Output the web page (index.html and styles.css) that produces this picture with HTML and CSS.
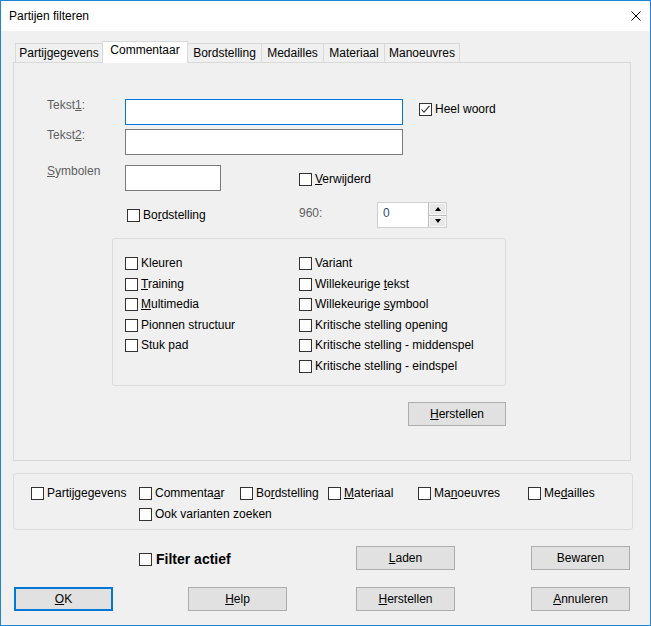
FILE: index.html
```html
<!DOCTYPE html>
<html lang="nl">
<head>
<meta charset="utf-8">
<title>Partijen filteren</title>
<link rel="stylesheet" href="styles.css">
</head>
<body>
<div class="window">
  <div class="titlebar">
    <span class="title">Partijen filteren</span>
    <svg class="close" width="10" height="10" viewBox="0 0 10 10"><path d="M0.5 0.5L9.5 9.5M9.5 0.5L0.5 9.5" stroke="#000" stroke-width="1" fill="none"/></svg>
  </div>
  <div class="content">
    <div class="tabs">
      <div class="tab w1">Partijgegevens</div>
      <div class="tab w2 active">Commentaar</div>
      <div class="tab w3">Bordstelling</div>
      <div class="tab w4">Medailles</div>
      <div class="tab w5">Materiaal</div>
      <div class="tab w6">Manoeuvres</div>
    </div>
    <div class="panel">
      <div class="form">
        <div class="lbl r1">Tekst<u>1</u>:</div>
        <div class="field wide focus r1"></div>
        <label class="cb heel r1"><span class="box"><svg width="11" height="11" viewBox="0 0 11 11"><path d="M1.5 5.5L4 8.2L9.5 1.8" stroke="#333" stroke-width="1.1" fill="none"/></svg></span><span>Heel woord</span></label>

        <div class="lbl r2">Tekst<u>2</u>:</div>
        <div class="field wide r2"></div>

        <div class="lbl r3"><u>S</u>ymbolen</div>
        <div class="field small r3"></div>
        <label class="cb verw r3"><span class="box"></span><span><u>V</u>erwijderd</span></label>

        <label class="cb bord r4"><span class="box"></span><span>Bo<u>r</u>dstelling</span></label>
        <div class="lbl num r4">960:</div>
        <div class="spin r4">
          <div class="spin-val">0</div>
          <div class="spin-btns">
            <div class="sb"><span class="up"></span></div>
            <div class="sb"><span class="down"></span></div>
          </div>
        </div>
      </div>

      <div class="group">
        <label class="cb"><span class="box"></span><span>Kleuren</span></label>
        <label class="cb"><span class="box"></span><span>Variant</span></label>
        <label class="cb"><span class="box"></span><span><u>T</u>raining</span></label>
        <label class="cb"><span class="box"></span><span>Willekeurige <u>t</u>ekst</span></label>
        <label class="cb"><span class="box"></span><span><u>M</u>ultimedia</span></label>
        <label class="cb"><span class="box"></span><span>Willekeurige <u>s</u>ymbool</span></label>
        <label class="cb"><span class="box"></span><span>Pionnen structuur</span></label>
        <label class="cb"><span class="box"></span><span>Kritische stelling opening</span></label>
        <label class="cb"><span class="box"></span><span>Stuk pad</span></label>
        <label class="cb"><span class="box"></span><span>Kritische stelling - middenspel</span></label>
        <span></span>
        <label class="cb"><span class="box"></span><span>Kritische stelling - eindspel</span></label>
      </div>

      <div class="panel-actions">
        <button class="btn narrow"><u>H</u>erstellen</button>
      </div>
    </div>

    <div class="scope">
      <label class="cb"><span class="box"></span><span>Partijgegevens</span></label>
      <label class="cb"><span class="box"></span><span>Commenta<u>a</u>r</span></label>
      <label class="cb"><span class="box"></span><span>Bo<u>r</u>dstelling</span></label>
      <label class="cb"><span class="box"></span><span><u>M</u>ateriaal</span></label>
      <label class="cb"><span class="box"></span><span>Ma<u>n</u>oeuvres</span></label>
      <label class="cb"><span class="box"></span><span>Me<u>d</u>ailles</span></label>
      <span></span>
      <label class="cb"><span class="box"></span><span>Ook varianten zoeken</span></label>
    </div>

    <div class="filter-row">
      <label class="cb filter"><span class="box"></span><span>Filter actief</span></label>
      <button class="btn"><u>L</u>aden</button>
      <button class="btn gap-right">Bewaren</button>
    </div>

    <div class="button-row">
      <button class="btn default"><u>O</u>K</button>
      <button class="btn help"><u>H</u>elp</button>
      <button class="btn reset"><u>H</u>erstellen</button>
      <button class="btn cancel"><u>A</u>nnuleren</button>
    </div>
  </div>
</div>
</body>
</html>
```
FILE: styles.css
```css
html, body {
  margin: 0;
  padding: 0;
  background: #f0f0f0;
}

.window {
  width: 651px;
  height: 626px;
  box-sizing: border-box;
  border: 1px solid #1f86d6;
  background: #f0f0f0;
  font-family: "Liberation Sans", Arial, sans-serif;
  font-size: 12px;
  color: #000;
  overflow: hidden;
}

u {
  text-decoration: underline;
  text-underline-offset: 1px;
  text-decoration-thickness: 1px;
}

.titlebar {
  height: 30px;
  background: #fff;
  display: flex;
  align-items: center;
  justify-content: space-between;
  padding-left: 8px;
}

.title {
  line-height: 30px;
}

.close {
  margin-right: 9px;
  display: block;
}

.content {
  padding: 10px 0 0 12px;
}

/* Tabs */
.tabs {
  display: flex;
  align-items: flex-end;
  padding-left: 2px;
}

.tab {
  height: 19px;
  box-sizing: border-box;
  border: 1px solid #d9d9d9;
  border-bottom: none;
  margin-right: -1px;
  text-align: center;
  line-height: 18px;
  background: #f0f0f0;
  white-space: nowrap;
}

.tab.active {
  height: 22px;
  margin-bottom: -1px;
  background: #fff;
  line-height: 17px;
  padding-bottom: 4px;
  position: relative;
  z-index: 1;
}

.w1 { width: 88px; }
.w2 { width: 86px; }
.w3 { width: 75px; }
.w4 { width: 63px; }
.w5 { width: 62px; }
.w6 { width: 76px; }

.panel {
  width: 618px;
  height: 399px;
  box-sizing: border-box;
  border: 1px solid #d9d9d9;
}

/* Form grid */
.form {
  display: grid;
  grid-template-columns: 78px 174px 78px 26px 16px auto;
  grid-template-rows: 26px 4px 26px 10px 26px 11px 26px;
  margin: 36px 0 0 33px;
}

.r1 { grid-row: 1; }
.r2 { grid-row: 3; }
.r3 { grid-row: 5; }
.r4 { grid-row: 7; }

.lbl {
  grid-column: 1;
  color: #5f5f5f;
  line-height: 13px;
  align-self: start;
  white-space: nowrap;
}

.field {
  box-sizing: border-box;
  border: 1px solid #7a7a7a;
  background: #fff;
}

.field.wide {
  grid-column: 2 / 5;
}

.field.focus {
  border-color: #0078d7;
}

.field.small {
  grid-column: 2;
  width: 96px;
}

.cb {
  display: inline-flex;
  align-items: center;
  gap: 3px;
  height: 13px;
  line-height: 13px;
  white-space: nowrap;
}

.box {
  width: 13px;
  height: 13px;
  box-sizing: border-box;
  border: 1px solid #333;
  background: #fff;
  flex: none;
  display: flex;
  align-items: center;
  justify-content: center;
}

.box svg {
  display: block;
}

.heel {
  grid-column: 6;
  align-self: start;
  margin-top: 4px;
}

.verw {
  grid-column: 3 / 7;
  align-self: start;
  margin-top: 8px;
}

.bord {
  grid-column: 2;
  align-self: center;
  margin-left: 2px;
}

.lbl.num {
  grid-column: 3;
  align-self: center;
  margin-bottom: 4px;
}

.spin {
  grid-column: 4 / 7;
  width: 70px;
  height: 26px;
  box-sizing: border-box;
  border: 1px solid #cfcfcf;
  background: #fff;
  display: flex;
}

.spin-val {
  flex: 1;
  padding-left: 5px;
  line-height: 20px;
  color: #34496e;
}

.spin-btns {
  width: 17px;
  display: flex;
  flex-direction: column;
  border-left: 1px solid #bdbdbd;
  background: #bdbdbd;
  gap: 1px;
}

.sb {
  flex: 1;
  background: #e8e8e8;
  border: 1px solid #f7f7f7;
  display: flex;
  align-items: center;
  justify-content: center;
}

.up {
  width: 0;
  height: 0;
  border-left: 3px solid transparent;
  border-right: 3px solid transparent;
  border-bottom: 4px solid #000;
}

.down {
  width: 0;
  height: 0;
  border-left: 3px solid transparent;
  border-right: 3px solid transparent;
  border-top: 4px solid #000;
}

/* Group box */
.group {
  margin: 10px 0 0 98px;
  width: 394px;
  height: 148px;
  box-sizing: border-box;
  border: 1px solid #dcdcdc;
  border-radius: 3px;
  padding: 18px 0 0 12px;
  display: grid;
  grid-template-columns: 174px auto;
  grid-auto-rows: 13px;
  row-gap: 7.5px;
}

.panel-actions {
  margin: 16px 0 0 394px;
}

/* Buttons */
.btn {
  width: 99px;
  height: 24px;
  box-sizing: border-box;
  border: 1px solid #adadad;
  background: #e1e1e1;
  font: inherit;
  color: #000;
  padding: 0;
  margin: 0;
  text-align: center;
  line-height: 22px;
  display: block;
}

.btn.narrow {
  width: 98px;
}

.btn.default {
  border: 2px solid #0078d7;
  line-height: 20px;
}

/* Scope group */
.scope {
  margin-top: 12px;
  width: 620px;
  height: 57px;
  box-sizing: border-box;
  border: 1px solid #dcdcdc;
  border-radius: 3px;
  padding: 13px 0 0 17px;
  display: grid;
  grid-template-columns: 108px 101px 88px 90px 110px auto;
  grid-template-rows: 13px 13px;
  row-gap: 8px;
}

.filter-row {
  margin-top: 16px;
  display: flex;
  align-items: center;
  height: 24px;
}

.cb.filter {
  width: 217px;
  margin-left: 126px;
  margin-top: 2px;
  font-weight: bold;
  font-size: 14px;
  gap: 4px;
}

.gap-right {
  margin-left: 76px !important;
}

.button-row {
  margin-top: 17px;
  display: flex;
  height: 24px;
}

.button-row .default { margin-left: 1px; }
.button-row .help { margin-left: 75px; }
.button-row .reset { margin-left: 69px; }
.button-row .cancel { margin-left: 76px; }
```
